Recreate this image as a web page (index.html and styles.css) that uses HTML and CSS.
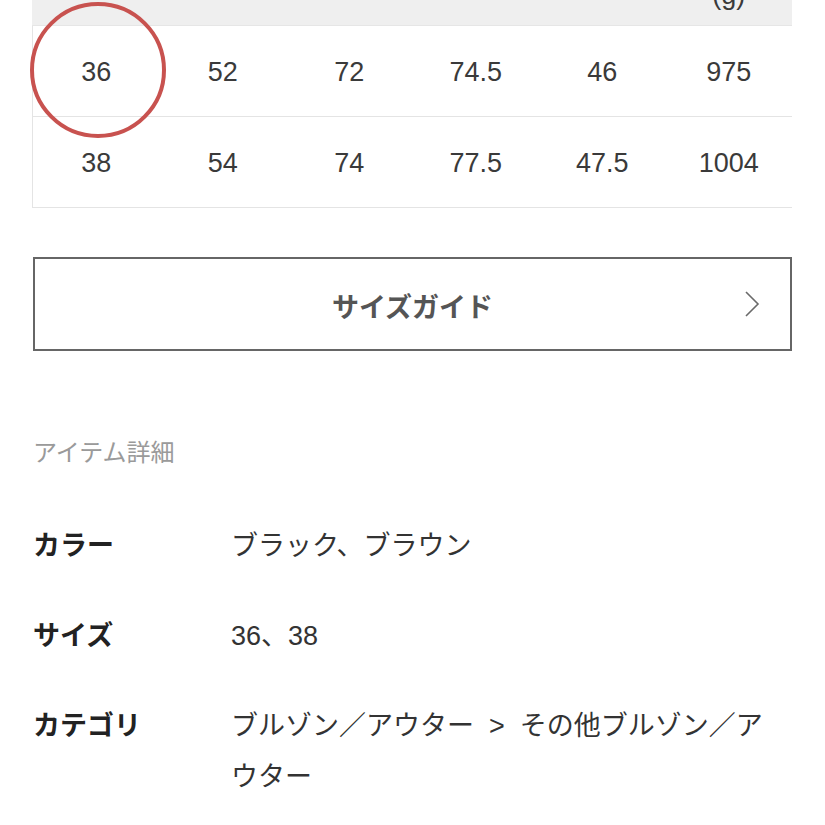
FILE: index.html
```html
<!DOCTYPE html>
<html lang="ja">
<head>
<meta charset="utf-8">
<title>サイズ・アイテム詳細</title>
<link rel="stylesheet" href="styles.css">
</head>
<body>
<div class="page">
  <div class="sheet">
    <div class="row head"><span></span><span></span><span></span><span></span><span></span><span>(g)</span></div>
    <div class="row"><span>36</span><span>52</span><span>72</span><span>74.5</span><span>46</span><span>975</span></div>
    <div class="row"><span>38</span><span>54</span><span>74</span><span>77.5</span><span>47.5</span><span>1004</span></div>
  </div>
  <span class="mark"></span>

  <a class="guide" href="#">
    <span></span>
    <span class="guide-label">サイズガイド</span>
    <svg class="chev" width="16" height="28" viewBox="0 0 16 28"><path d="M2 2 L14 14 L2 26"/></svg>
  </a>

  <h2 class="title">アイテム詳細</h2>

  <dl class="spec">
    <div class="item"><dt>カラー</dt><dd>ブラック、ブラウン</dd></div>
    <div class="item"><dt>サイズ</dt><dd>36、38</dd></div>
    <div class="item"><dt>カテゴリ</dt><dd>ブルゾン／アウター<span class="sep">&gt;</span>その他ブルゾン／アウター</dd></div>
  </dl>
</div>
</body>
</html>
```

FILE: styles.css
```css
html, body {
  margin: 0;
  padding: 0;
  background: #ffffff;
}

body {
  font-family: "Liberation Sans", "Noto Sans CJK JP", sans-serif;
  color: #333333;
  overflow: hidden;
}

.page {
  position: relative;
  display: flow-root;
  padding: 0 33px;
}

.sheet {
  margin-top: -30px;
  margin-left: -1px;
}

.row {
  display: grid;
  grid-template-columns: repeat(6, 1fr);
  align-items: center;
  height: 91px;
  box-sizing: border-box;
  padding-top: 3px;
  border-left: 1px solid #e4e4e4;
  border-bottom: 1px solid #e4e4e4;
  font-size: 27px;
  line-height: 1;
  color: #3a3a3a;
}

.row span {
  text-align: center;
}

.row.head {
  height: 56px;
  padding-top: 0;
  padding-bottom: 15px;
  align-items: end;
  background: #efefef;
  line-height: 30px;
  border-left: 0;
  border-bottom-color: #e6e6e6;
}

.mark {
  position: absolute;
  left: 30px;
  top: 2px;
  width: 136px;
  height: 136px;
  box-sizing: border-box;
  border: 4px solid #c8524f;
  border-radius: 50%;
}

.guide {
  display: grid;
  grid-template-columns: 1fr auto 1fr;
  align-items: center;
  height: 94px;
  box-sizing: border-box;
  margin-top: 49px;
  border: 2px solid #666666;
  text-decoration: none;
  color: #555555;
}

.guide-label {
  font-size: 27px;
  font-weight: bold;
  padding-top: 3px;
}

.chev {
  justify-self: end;
  margin-right: 30px;
  fill: none;
  stroke: #6a6a6a;
  stroke-width: 1.6;
}

.title {
  margin: 85px 0 0;
  font-size: 24px;
  line-height: 34px;
  font-weight: normal;
  color: #9a9a9a;
}

.spec {
  display: flex;
  flex-direction: column;
  gap: 39px;
  margin: 51px 0 0;
  font-size: 27px;
  line-height: 51px;
}

.item {
  display: flex;
}

.item dt {
  flex: 0 0 198px;
  font-weight: bold;
  color: #222222;
}

.item dd {
  margin: 0;
  width: 545px;
  color: #333333;
}

.sep {
  margin: 0 15px;
}
```
